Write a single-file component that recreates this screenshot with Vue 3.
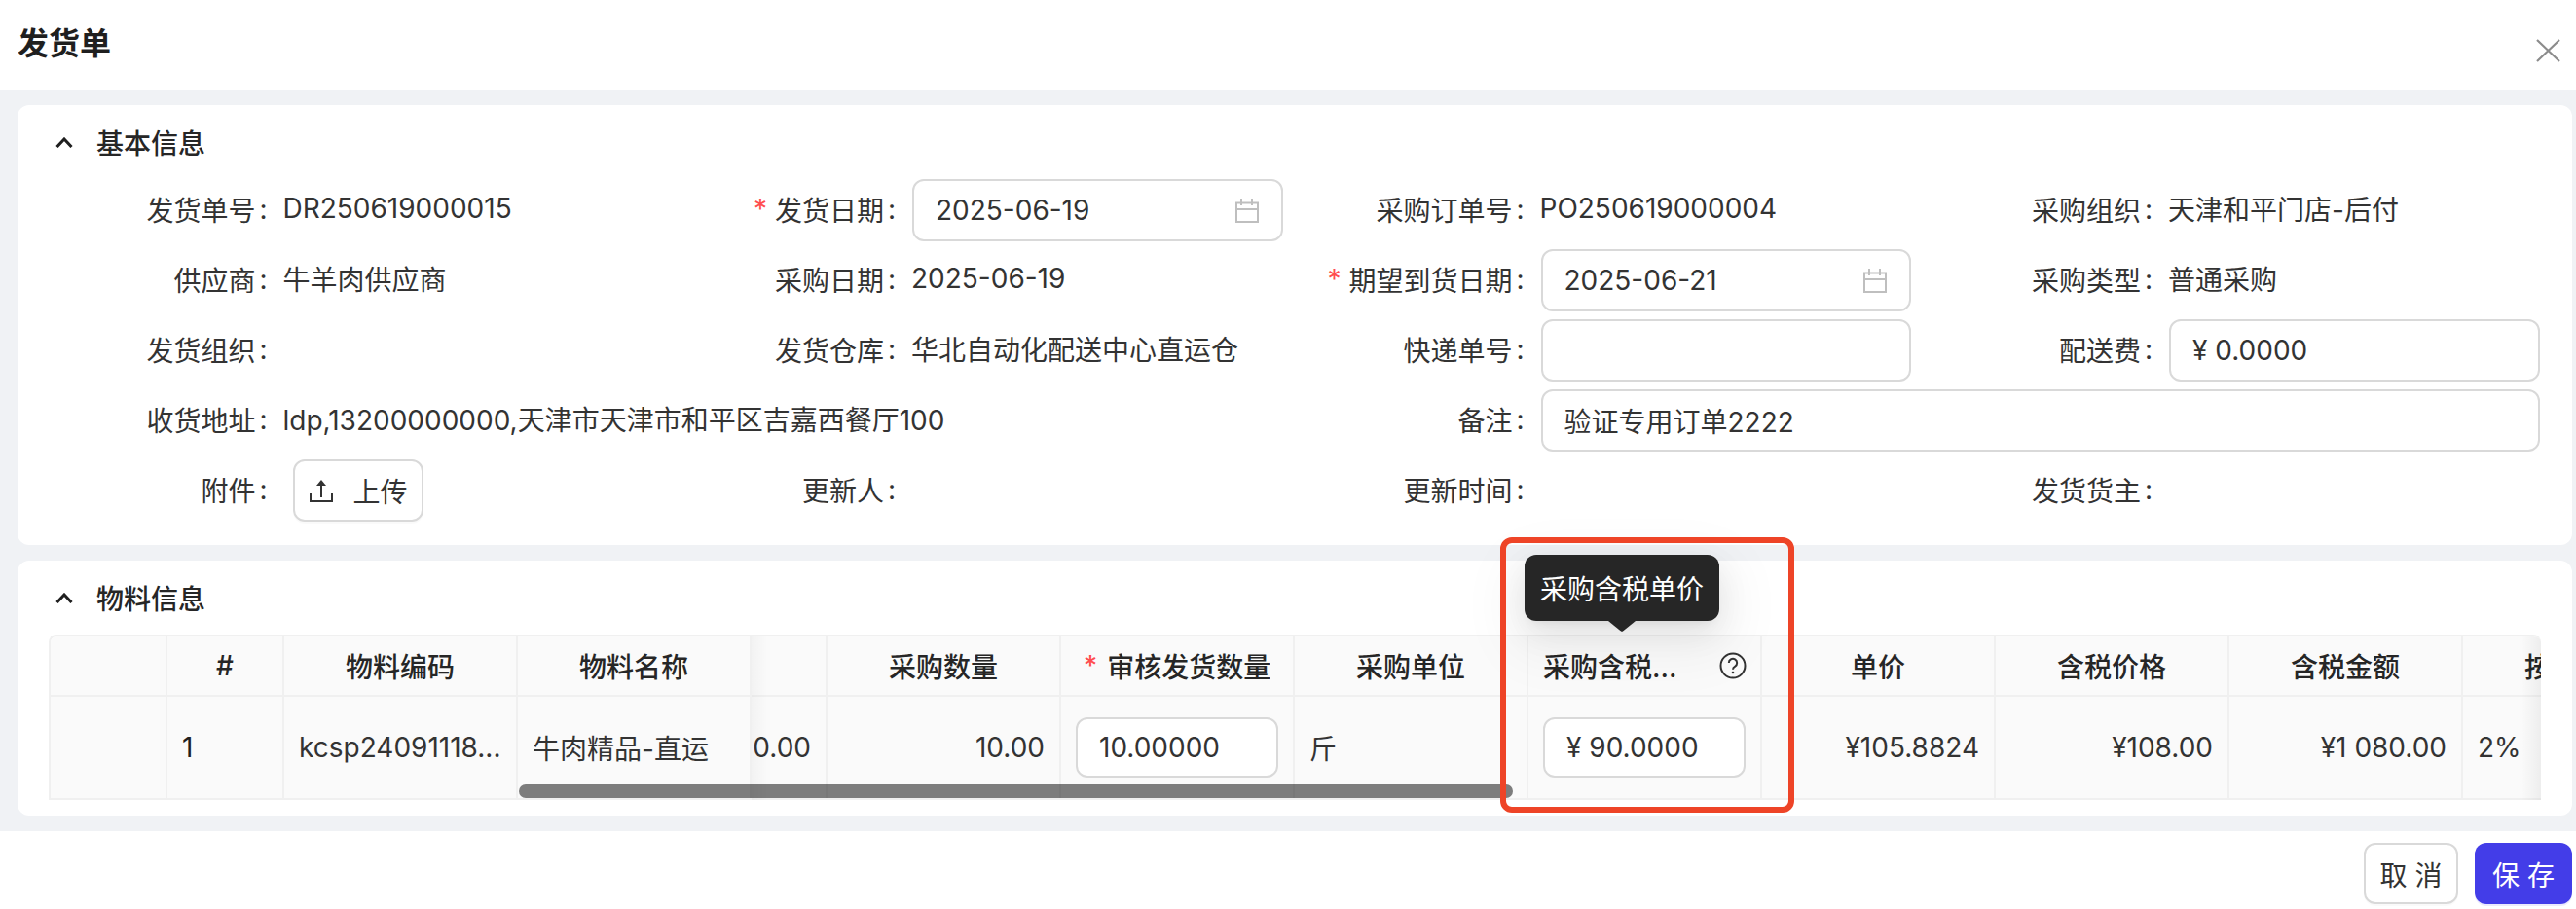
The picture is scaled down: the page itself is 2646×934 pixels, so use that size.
<script setup>
const headers = [
  { t: '' }, { t: '#' }, { t: '物料编码' }, { t: '物料名称' }, { t: '' },
  { t: '采购数量' }, { t: '审核发货数量', req: true }, { t: '采购单位' },
  { t: '采购含税...', help: true }, { t: '单价' }, { t: '含税价格' }, { t: '含税金额' }, { t: '按量比例' }
]
const form = [
  { l: '发货单号', v: 'DR250619000015' },
  { l: '发货日期', req: true, date: '2025-06-19' },
  { l: '采购订单号', v: 'PO250619000004' },
  { l: '采购组织', v: '天津和平门店-后付' },
  { l: '供应商', v: '牛羊肉供应商' },
  { l: '采购日期', v: '2025-06-19' },
  { l: '期望到货日期', req: true, date: '2025-06-21' },
  { l: '采购类型', v: '普通采购' },
  { l: '发货组织', v: '' },
  { l: '发货仓库', v: '华北自动化配送中心直运仓' },
  { l: '快递单号', input: '' },
  { l: '配送费', input: '¥ 0.0000' },
  { l: '收货地址', v: 'ldp,13200000000,天津市天津市和平区吉嘉西餐厅100', wide: true },
  { l: '备注', input: '验证专用订单2222', wide: true },
  { l: '附件', upload: true },
  { l: '更新人', v: '' },
  { l: '更新时间', v: '' },
  { l: '发货货主', v: '' }
]
</script>

<template>
  <div class="page">
    <header class="top">
      <h1 class="title">发货单</h1>
      <svg class="close" width="25" height="24" viewBox="0 0 25 24">
        <path d="M1 1l23 22M24 1L1 23" fill="none" stroke="#8c8c8c" stroke-width="2.2" />
      </svg>
    </header>

    <main class="body">
      <section class="card first">
        <div class="head">
          <svg class="chev" width="18" height="11" viewBox="0 0 18 11">
            <path d="M1.5 10L9 2l7.5 8" fill="none" stroke="#1f1f1f" stroke-width="3" />
          </svg>
          <span>基本信息</span>
        </div>
        <div class="form">
          <div v-for="f in form" :key="f.l" class="item" :class="{ wide: f.wide }">
            <div class="label">
              <span v-if="f.req" class="star">*</span>
              <span>{{ f.l }}</span>
              <span class="colon">:</span>
            </div>
            <div v-if="f.date" class="input">
              <span>{{ f.date }}</span>
              <svg width="24" height="25" viewBox="0 0 24 25">
                <path d="M1 4.500h22v19.500h-22zM1 11h22M6 0v7M17 0v7" fill="none" stroke="#bfbfbf" stroke-width="2" />
              </svg>
            </div>
            <div v-else-if="f.input !== undefined" class="input"><span>{{ f.input }}</span></div>
            <div v-else-if="f.upload" class="upload">
              <svg width="24" height="23" viewBox="0 0 24 23">
                <path d="M1 14v8h22v-8M12 4v14" fill="none" stroke="#333" stroke-width="2" />
                <path d="M12 0l5 6H7z" fill="#333" />
              </svg>
              <span>上传</span>
            </div>
            <div v-else class="value">{{ f.v }}</div>
          </div>
        </div>
      </section>

      <section class="card second">
        <div class="head">
          <svg class="chev" width="18" height="11" viewBox="0 0 18 11">
            <path d="M1.5 10L9 2l7.5 8" fill="none" stroke="#1f1f1f" stroke-width="3" />
          </svg>
          <span>物料信息</span>
        </div>
        <div class="table-wrap">
          <div class="grid">
            <template v-for="(h, i) in headers" :key="i">
              <div class="th" :class="{ help: h.help }">
                <span v-if="h.req" class="th-star">*</span>
                <span>{{ h.t }}</span>
                <svg v-if="h.help" width="28" height="28" viewBox="0 0 28 28">
                  <circle cx="14" cy="14" r="12.500" fill="none" stroke="#333" stroke-width="2" />
                  <path d="M9.800 11a4.200 4.200 0 1 1 6.400 3.600c-1.500.9-2.200 1.600-2.200 3.100" fill="none" stroke="#333" stroke-width="2" />
                  <circle cx="14" cy="21" r="1.300" fill="#333" />
                </svg>
              </div>
            </template>
            <div class="td"></div>
            <div class="td strong">1</div>
            <div class="td">kcsp24091118...</div>
            <div class="td">牛肉精品-直运</div>
            <div class="td right">0.00</div>
            <div class="td right">10.00</div>
            <div class="td"><div class="cell-input">10.00000</div></div>
            <div class="td">斤</div>
            <div class="td"><div class="cell-input">¥ 90.0000</div></div>
            <div class="td right">¥105.8824</div>
            <div class="td right">¥108.00</div>
            <div class="td right">¥1 080.00</div>
            <div class="td">2%</div>
          </div>
          <div class="shadow-left"></div>
          <div class="shadow-right"></div>
          <div class="scrollbar"></div>
        </div>
      </section>
    </main>

    <footer class="foot">
      <button class="btn">取 消</button>
      <button class="btn primary">保 存</button>
    </footer>

    <div class="tooltip">采购含税单价</div>
    <div class="mark"></div>
  </div>
</template>

<style>
html, body { margin: 0; background: #fff; overflow: hidden; }
</style>

<style scoped>
.page {
  position: relative;
  width: 2646px;
  height: 934px;
  font-family: "Inter", "Noto Sans CJK SC", sans-serif;
  font-size: 28px;
  color: #333;
  background: #fff;
}
.top {
  height: 92px;
  box-sizing: border-box;
  padding: 0 16px 0 18px;
  display: flex;
  justify-content: space-between;
  align-items: flex-start;
}
.title {
  margin: 23px 0 0;
  font-size: 32px;
  line-height: 44px;
  font-weight: 600;
  color: #1f1f1f;
}
.close { margin-top: 40px; }
.body {
  background: #f0f2f5;
  padding: 16px 4px 16px 18px;
  display: flex;
  flex-direction: column;
  gap: 16px;
}
.card { background: #fff; border-radius: 12px; }
.first { height: 452px; }
.second { height: 262px; }
.head {
  height: 76px;
  display: flex;
  align-items: center;
  padding-left: 39px;
  gap: 24px;
  font-weight: 500;
  color: #262626;
}
.form {
  margin-left: 8.500px;
  display: grid;
  grid-template-columns: repeat(4, 645.500px);
  grid-auto-rows: 64px;
  row-gap: 8px;
}
.item { display: flex; align-items: center; }
.item.wide { grid-column: span 2; }
.label {
  flex: none;
  width: 265px;
  box-sizing: border-box;
  padding: 0 17px 2px 0;
  display: flex;
  justify-content: flex-end;
  align-items: center;
  white-space: nowrap;
}
.colon { margin-left: 4px; }
.star { color: #ff4d4f; margin-right: 8px; font-size: 28px; }
.value { margin: -4px 0 0 -1px; white-space: nowrap; }
.input {
  flex: 1;
  height: 64px;
  box-sizing: border-box;
  border: 2px solid #d9d9d9;
  border-radius: 12px;
  padding: 0 23px 0 22px;
  display: flex;
  align-items: center;
  justify-content: space-between;
  background: #fff;
}
.upload {
  margin-left: 9px;
  width: 134px;
  height: 64px;
  box-sizing: border-box;
  border: 2px solid #d9d9d9;
  border-radius: 12px;
  padding-left: 2px;
  display: flex;
  align-items: center;
  justify-content: center;
  gap: 20px;
  box-shadow: 0 2px 0 rgba(0, 0, 0, 0.02);
}
.table-wrap {
  position: relative;
  margin: 0 32px;
  height: 170px;
  overflow: hidden;
  border-top: 2px solid #f0f0f0;
  border-left: 2px solid #f0f0f0;
  box-sizing: border-box;
  border-radius: 8px 8px 0 0;
}
.grid {
  display: grid;
  grid-template-columns: 120px 120px 240px 240px 78px repeat(8, 240px);
  grid-template-rows: 62px 106px;
  width: max-content;
}
.th, .td {
  box-sizing: border-box;
  background: #fafafa;
  border-right: 2px solid #f0f0f0;
  border-bottom: 2px solid #f0f0f0;
  display: flex;
  align-items: center;
  white-space: nowrap;
}
.th {
  justify-content: center;
  font-weight: 500;
  color: #262626;
}
.th.help { justify-content: space-between; padding: 0 14px 0 15px; }
.th-star { color: #ff4d4f; margin-right: 10px; }
.td { padding: 0 15px; }
.td.right { justify-content: flex-end; }
.td.strong { color: #1f1f1f; }
.cell-input {
  width: 100%;
  height: 62px;
  box-sizing: border-box;
  border: 2px solid #d9d9d9;
  border-radius: 12px;
  background: #fff;
  padding-left: 22px;
  display: flex;
  align-items: center;
}
.shadow-left {
  position: absolute;
  left: 720px;
  top: 0;
  bottom: 0;
  width: 16px;
  background: linear-gradient(to right, rgba(0, 0, 0, 0.03), transparent);
}
.shadow-right {
  position: absolute;
  right: 0;
  top: 0;
  bottom: 0;
  width: 20px;
  background: linear-gradient(to left, rgba(0, 0, 0, 0.05), transparent);
}
.scrollbar {
  position: absolute;
  left: 481px;
  top: 152px;
  width: 1021px;
  height: 14px;
  border-radius: 7px;
  background: rgba(0, 0, 0, 0.5);
}
.foot {
  height: 80px;
  box-sizing: border-box;
  padding: 12px 4px 0 0;
  display: flex;
  justify-content: flex-end;
  gap: 17px;
}
.btn {
  font: inherit;
  width: 97px;
  height: 63px;
  box-sizing: border-box;
  border: 2px solid #d9d9d9;
  border-radius: 12px;
  background: #fff;
  color: #333;
  padding: 0;
  box-shadow: 0 2px 0 rgba(0, 0, 0, 0.02);
}
.btn.primary {
  width: 100px;
  border: none;
  background: #433de8;
  color: #fff;
  box-shadow: 0 2px 0 rgba(60, 50, 240, 0.1);
}
.tooltip {
  position: absolute;
  left: 1566px;
  top: 570px;
  width: 200px;
  height: 68px;
  border-radius: 12px;
  background: #262626;
  color: #fff;
  display: flex;
  align-items: center;
  justify-content: center;
  box-shadow: 0 12px 32px rgba(0, 0, 0, 0.08), 0 6px 12px -8px rgba(0, 0, 0, 0.12), 0 18px 56px 16px rgba(0, 0, 0, 0.05);
}
.tooltip::after {
  content: "";
  position: absolute;
  left: 86px;
  top: 68px;
  width: 28px;
  height: 11px;
  background: #262626;
  clip-path: polygon(0 0, 100% 0, 56% 92%, 50% 100%, 44% 92%);
}
.mark {
  position: absolute;
  left: 1541px;
  top: 552px;
  width: 302px;
  height: 283px;
  box-sizing: border-box;
  border: 6px solid #ee4427;
  border-radius: 12px;
  pointer-events: none;
}
</style>
